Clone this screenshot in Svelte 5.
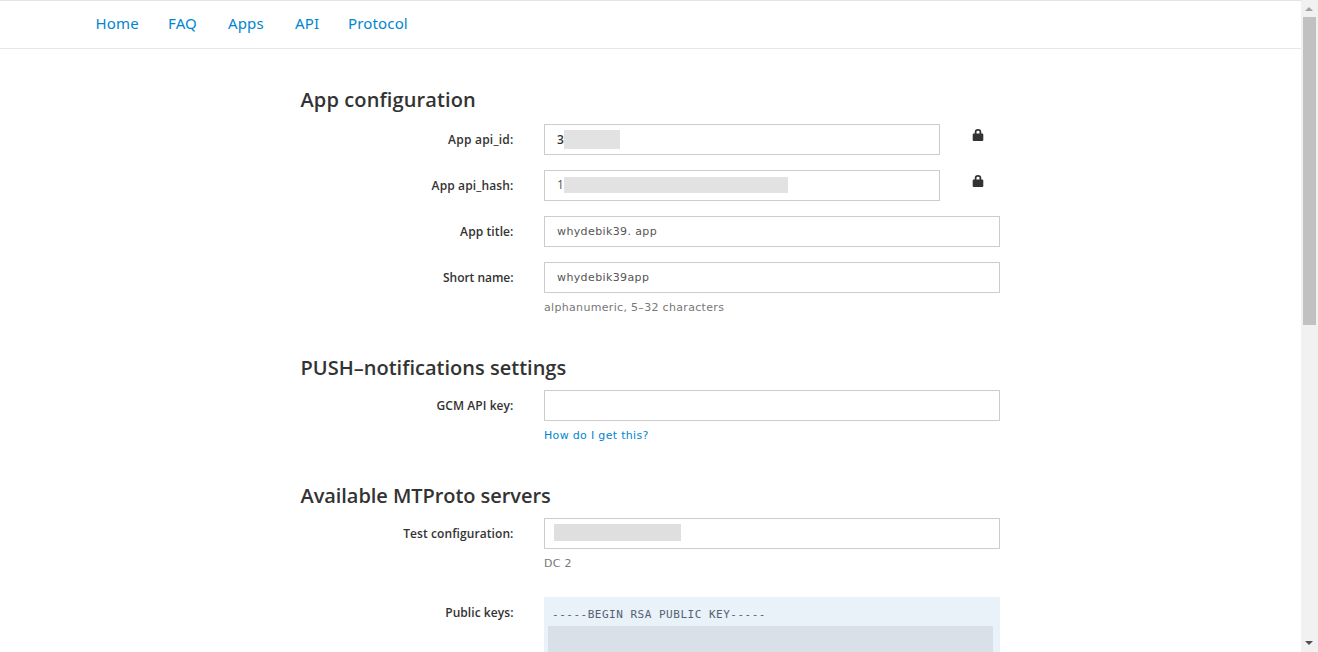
<script>
  const nav = [
    { label: 'Home', width: 42.5 },
    { label: 'FAQ', width: 30 },
    { label: 'Apps', width: 37 },
    { label: 'API', width: 23 },
    { label: 'Protocol', width: 60 }
  ];
  const sections = [
    {
      title: 'App configuration', space: 0.12,
      fields: [
        { label: 'App api_id:', space: 0.22, value: '3', bold: true, locked: true, mask: 56, maskHeight: 19 },
        { label: 'App api_hash:', space: 0.13, value: '1', raised: true, locked: true, mask: 224, maskHeight: 16 },
        { label: 'App title:', space: 0.1, value: 'whydebik39. app' },
        { label: 'Short name:', space: -0.03, value: 'whydebik39app', help: 'alphanumeric, 5–32 characters' }
      ]
    },
    {
      title: 'PUSH–notifications settings', space: 0.01,
      fields: [{ label: 'GCM API key:', space: 0.08, value: '', link: 'How do I get this?' }]
    },
    {
      title: 'Available MTProto servers', space: -0.06,
      fields: [
        { label: 'Test configuration:', space: 0.08, value: '', mask: 127, maskHeight: 17, server: true, help: 'DC 2' },
        { label: 'Public keys:', space: 0.06, key: '-----BEGIN RSA PUBLIC KEY-----' }
      ]
    }
  ];
</script>

<div class="window">
  <div class="page">
    <header>
      <nav>
        {#each nav as item}
          <a href="#top" style="width:{item.width}px">{item.label}</a>
        {/each}
      </nav>
    </header>
    <main>
      {#each sections as section}
        <section>
          <h3 style="letter-spacing:{section.space}px">{section.title}</h3>
          {#each section.fields as field}
            <div class="row">
              <div class="label" style="letter-spacing:{field.space}px">{field.label}</div>
              <div class="control">
                {#if field.key}
                  <div class="key"><pre>{field.key}</pre><div class="keymask"></div></div>
                {:else}
                  <div class="line">
                    <div class="box" class:server={field.server} class:bold={field.bold} class:raised={field.raised}>
                      <span>{field.value}</span>
                      {#if field.mask}<i style="width:{field.mask}px;height:{field.maskHeight}px"></i>{/if}
                    </div>
                    {#if field.locked}
                      <svg width="12" height="14" viewBox="0 0 12 14"><path d="M.7 6.500q0-1 1-1H2.700V4Q2.700 1 6 1t3.300 3v1.500h1q1 0 1 1V12q0 1-1 1h-8.600q-1 0-1-1zM4.500 5.500h3V3.700Q7.500 2.800 6 2.800T4.500 3.700z" fill="#333" fill-rule="evenodd" /></svg>
                    {/if}
                  </div>
                  {#if field.help}<p>{field.help}</p>{/if}
                  {#if field.link}<p class="link"><a href="#help">{field.link}</a></p>{/if}
                {/if}
              </div>
            </div>
          {/each}
        </section>
      {/each}
    </main>
  </div>
  <aside>
    <svg width="17" height="17" viewBox="0 0 17 17"><path d="M4 11h8L8 7z" fill="#a3a3a3" /></svg>
    <div class="thumb"></div>
    <svg class="down" width="17" height="17" viewBox="0 0 17 17"><path d="M4 6h8L8 10z" fill="#505050" /></svg>
  </aside>
</div>

<style>
  :global(body) { margin: 0; overflow: hidden; background: #fff; }
  .window { height: 652px; display: flex; overflow: hidden; box-sizing: border-box; font: 12px/18px "Open Sans", sans-serif; color: #333; }
  .page { flex: 1; min-width: 0; border-top: 1px solid #e3e3e3; }
  header { height: 47px; border-bottom: 1px solid #e7e7e7; }
  nav { display: flex; gap: 30px; padding: 11px 0 0 95.5px; font: 15px/22px "Noto Sans", sans-serif; letter-spacing: .15px; }
  nav a { white-space: nowrap; }
  a { color: #0086d1; text-decoration: none; }
  main { width: 700px; margin-left: 300px; padding-top: 37px; }
  section { padding-bottom: 38px; }
  h3 { margin: 0 0 8px .5px; font: 600 20px/28px "Open Sans", sans-serif; white-space: nowrap; }
  section:first-child h3 { margin-bottom: 10px; }
  .row { display: flex; margin-bottom: 15px; }
  .label { width: 213.5px; margin-right: 30.5px; text-align: right; font-weight: 600; padding-top: 7px; white-space: nowrap; }
  .control { width: 456px; }
  .line { display: flex; align-items: flex-start; }
  .box { flex: 1; height: 31px; box-sizing: border-box; border: 1px solid #ccc; padding: 1px 0 0 12px; display: flex; align-items: center; color: #555; font: 11px/18px "DejaVu Sans", sans-serif; letter-spacing: .38px; }
  .box span { width: 7px; white-space: nowrap; }
  .box.bold { padding-top: 0; font: 600 12px/18px "Open Sans", sans-serif; color: #333; }
  .box.server { padding: 0 0 2px 9px; }
  .box.raised { padding: 0 0 1px 12px; font: 12px/18px "Open Sans", sans-serif; }
  .server span { width: 0; }
  .box i { background: #e2e2e2; }
  .server i { background: #dfdfdf; }
  .line svg { margin: 4px 16px 0 32px; flex: none; }
  p { margin: 6px 0 -1px; font: 11px/18px "DejaVu Sans", sans-serif; color: #777; letter-spacing: .32px; }
  .link { letter-spacing: .32px; }
  section:has(p:last-child) .row:has(p) { margin-bottom: 0; }
  .row:has(p):not(:last-child) { margin-bottom: 25px !important; }
  .control { display: flow-root; }
  .key { height: 100px; background: #e9f1f9; padding: 9px 7px 0 4px; }
  pre { margin: 0 0 2px 4px; font: 11px/18px "DejaVu Sans Mono", monospace; letter-spacing: .51px; color: #546172; }
  .keymask { height: 80px; background: #d9e0e7; }
  aside { width: 17px; background: #f1f1f1; display: flex; flex-direction: column; }
  aside svg { display: block; flex: none; }
  .thumb { height: 308px; margin: 0 2px; background: #c1c1c1; }
  .down { margin-top: auto; }
</style>
